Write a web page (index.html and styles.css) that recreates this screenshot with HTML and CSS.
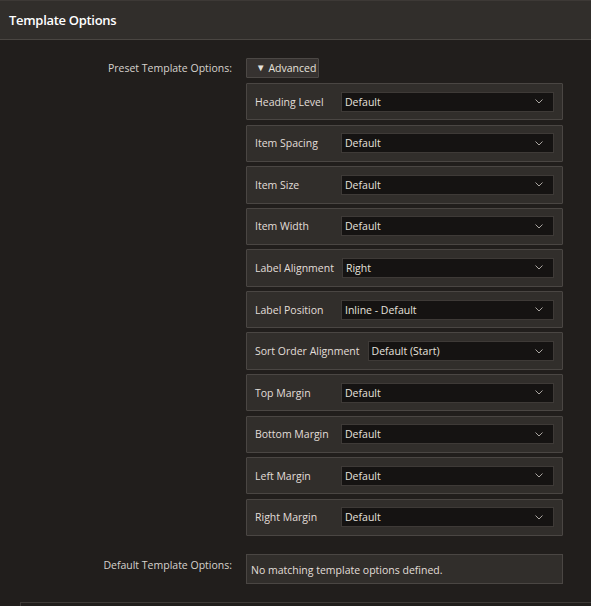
FILE: index.html
```html
<!DOCTYPE html>
<html lang="en">
<head>
<meta charset="utf-8">
<title>Template Options</title>
<link rel="stylesheet" href="styles.css">
</head>
<body>
<div class="header"><h1 class="title">Template Options</h1></div>
<div class="content">
  <div class="form-row">
    <div class="row-label preset-label">Preset Template Options:</div>
    <div class="row-value">
      <button class="adv-btn" type="button"><span class="tri">▼</span>Advanced</button>
      <div class="groups">
        <div class="group"><span class="g-label">Heading Level</span><div class="select"><span>Default</span><svg class="chev" width="8" height="5" viewBox="0 0 8 5"><polyline points="0.5,0.5 4,4 7.5,0.5"/></svg></div></div>
        <div class="group"><span class="g-label">Item Spacing</span><div class="select"><span>Default</span><svg class="chev" width="8" height="5" viewBox="0 0 8 5"><polyline points="0.5,0.5 4,4 7.5,0.5"/></svg></div></div>
        <div class="group"><span class="g-label">Item Size</span><div class="select"><span>Default</span><svg class="chev" width="8" height="5" viewBox="0 0 8 5"><polyline points="0.5,0.5 4,4 7.5,0.5"/></svg></div></div>
        <div class="group"><span class="g-label">Item Width</span><div class="select"><span>Default</span><svg class="chev" width="8" height="5" viewBox="0 0 8 5"><polyline points="0.5,0.5 4,4 7.5,0.5"/></svg></div></div>
        <div class="group"><span class="g-label">Label Alignment</span><div class="select"><span>Right</span><svg class="chev" width="8" height="5" viewBox="0 0 8 5"><polyline points="0.5,0.5 4,4 7.5,0.5"/></svg></div></div>
        <div class="group"><span class="g-label">Label Position</span><div class="select"><span>Inline - Default</span><svg class="chev" width="8" height="5" viewBox="0 0 8 5"><polyline points="0.5,0.5 4,4 7.5,0.5"/></svg></div></div>
        <div class="group"><span class="g-label">Sort Order Alignment</span><div class="select"><span>Default (Start)</span><svg class="chev" width="8" height="5" viewBox="0 0 8 5"><polyline points="0.5,0.5 4,4 7.5,0.5"/></svg></div></div>
        <div class="group"><span class="g-label">Top Margin</span><div class="select"><span>Default</span><svg class="chev" width="8" height="5" viewBox="0 0 8 5"><polyline points="0.5,0.5 4,4 7.5,0.5"/></svg></div></div>
        <div class="group"><span class="g-label">Bottom Margin</span><div class="select"><span>Default</span><svg class="chev" width="8" height="5" viewBox="0 0 8 5"><polyline points="0.5,0.5 4,4 7.5,0.5"/></svg></div></div>
        <div class="group"><span class="g-label">Left Margin</span><div class="select"><span>Default</span><svg class="chev" width="8" height="5" viewBox="0 0 8 5"><polyline points="0.5,0.5 4,4 7.5,0.5"/></svg></div></div>
        <div class="group"><span class="g-label">Right Margin</span><div class="select"><span>Default</span><svg class="chev" width="8" height="5" viewBox="0 0 8 5"><polyline points="0.5,0.5 4,4 7.5,0.5"/></svg></div></div>
      </div>
    </div>
  </div>
  <div class="form-row default-row">
    <div class="row-label default-label">Default Template Options:</div>
    <div class="row-value">
      <div class="default-box">No matching template options defined.</div>
    </div>
  </div>
  <div class="next-region"></div>
</div>
</body>
</html>
```

FILE: styles.css
```css
html, body {
  margin: 0;
  padding: 0;
}
body {
  background: #211e1c;
  color: #dcd8d3;
  font-family: "Open Sans", "Noto Sans", sans-serif;
  font-size: 10.5px;
  overflow: hidden;
}
.header {
  background: #312e2b;
  border-top: 1px solid #3d3936;
  border-bottom: 1px solid #4a4642;
  height: 38px;
  display: flex;
  align-items: center;
  padding-left: 9px;
}
.title {
  margin: 0;
  font-size: 13px;
  font-weight: 600;
  color: #ffffff;
  letter-spacing: -0.3px;
}
.content {
  padding-top: 18px;
}
.form-row {
  display: grid;
  grid-template-columns: 232px 317px;
  column-gap: 14px;
}
.row-label {
  text-align: right;
  color: #d6d2cd;
}
.preset-label {
  line-height: 20px;
}
.adv-btn {
  display: flex;
  align-items: center;
  height: 20px;
  width: 73px;
  padding: 0 0 0 9px;
  background: #363230;
  border: 1px solid #4c4845;
  border-radius: 1px;
  color: #e6e2dd;
  font-family: inherit;
  font-size: 10.5px;
  line-height: 18px;
}
.tri {
  font-size: 9.5px;
  margin-right: 3px;
}
.groups {
  margin-top: 5px;
  display: flex;
  flex-direction: column;
  gap: 4.2px;
}
.group {
  display: flex;
  align-items: center;
  background: #312e2b;
  border: 1px solid #4a4643;
  border-radius: 1px;
  padding: 7.7px 8px;
}
.g-label {
  min-width: 78px;
  margin-right: 8px;
  white-space: nowrap;
  color: #e2ded9;
}
.select {
  flex: 1;
  display: flex;
  align-items: center;
  justify-content: space-between;
  height: 20px;
  box-sizing: border-box;
  background: #151312;
  border: 1px solid #3e3a37;
  padding: 0 10px 0 3px;
  color: #e6e2dd;
}
.chev {
  display: block;
}
.chev polyline {
  fill: none;
  stroke: #a9a5a0;
  stroke-width: 1;
}
.default-row {
  margin-top: 18px;
}
.default-label {
  padding-top: 4px;
}
.default-box {
  height: 30px;
  box-sizing: border-box;
  background: #312e2b;
  border: 1px solid #4a4643;
  padding: 0 4px;
  display: flex;
  align-items: center;
  padding-top: 1px;
  color: #e2ded9;
}
.next-region {
  margin: 18px 0 0 20px;
  height: 10px;
  border-top: 1px solid #3e3a37;
  border-left: 1px solid #3e3a37;
}
```
